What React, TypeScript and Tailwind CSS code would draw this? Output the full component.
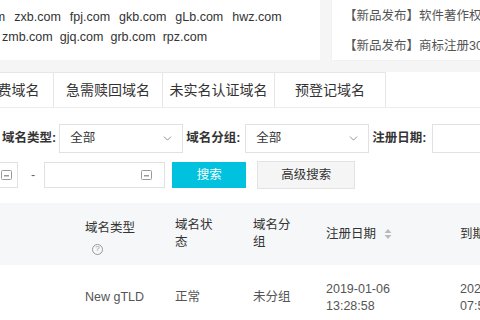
import { ChevronDown } from 'lucide-react'

const lineOne = ['hzb.com', 'zxb.com', 'fpj.com', 'gkb.com', 'gLb.com', 'hwz.com']
const lineTwo = ['zmb.com', 'gjq.com', 'grb.com', 'rpz.com']
const tabs = [
    { label: '免费域名', w: 'w-[84px]' },
    { label: '急需赎回域名', w: 'w-[109px]' },
    { label: '未实名认证域名', w: 'w-[112px]' },
    { label: '预登记域名', w: 'w-[111px]' },
]

function CalendarIcon() {
    return (
        <svg width="11" height="10" viewBox="0 0 11 10" className="text-[#999]">
            <rect x="0.5" y="0.5" width="10" height="9" rx="1" fill="none" stroke="currentColor" />
            <rect x="3" y="5" width="5" height="1.5" fill="currentColor" />
        </svg>
    )
}

function SortIcon() {
    return (
        <svg width="8" height="12" viewBox="0 0 8 12" className="text-[#bbb]">
            <path d="M4 1 L7.5 5 H0.5 Z" fill="currentColor" />
            <path d="M4 11 L7.5 7 H0.5 Z" fill="currentColor" />
        </svg>
    )
}

function Select() {
    return (
        <div className="flex items-center justify-between w-[124px] h-[29px] border border-[#e1e1e1] pl-[10px] pr-[8px]">
            <span>全部</span>
            <ChevronDown size={13} strokeWidth={1.5} className="text-[#777]" />
        </div>
    )
}

export default function App() {
    return (
        <div className="w-[480px] h-[320px] overflow-hidden bg-white text-[12.5px] text-[#333] font-['Liberation_Sans','Noto_Sans_CJK_SC',sans-serif]">
            {/* hot domains + news */}
            <div className="flex gap-[12px] h-[72px] bg-[#f5f5f5] pb-[12px]">
                <div className="w-[320px] shrink-0 bg-white pt-[7px] leading-[20px]">
                    <div className="flex gap-x-[9px] -ml-[42px] whitespace-nowrap">
                        {lineOne.map((d) => <span key={d}>{d}</span>)}
                    </div>
                    <div className="flex gap-x-[7px] ml-[2px] whitespace-nowrap">
                        {lineTwo.map((d) => <span key={d}>{d}</span>)}
                    </div>
                </div>
                <div className="flex-1 bg-white pl-[12px] pt-[7px] text-[#555] whitespace-nowrap leading-[18px] shadow-[0_0_2px_rgba(0,0,0,0.05)]">
                    <div>【新品发布】软件著作权登记</div>
                    <div className="mt-[12px]">【新品发布】商标注册300元</div>
                </div>
            </div>

            {/* tabs */}
            <div className="flex h-[36px] -ml-[30px] border-b border-[#ececec] text-[14px] text-[#333]">
                {tabs.map((t) => (
                    <div key={t.label} className={`${t.w} shrink-0 flex items-center justify-center border-t border-r border-[#e6e6e6] whitespace-nowrap`}>
                        {t.label}
                    </div>
                ))}
                <div className="flex-1" />
            </div>

            {/* filters */}
            <div className="flex items-center h-[29px] mt-[16px] ml-[2px] whitespace-nowrap">
                <span className="font-bold w-[56px]">域名类型:</span>
                <div className="ml-[3px]"><Select /></div>
                <span className="font-bold ml-[3px] w-[57px]">域名分组:</span>
                <div className="ml-[5px]"><Select /></div>
                <span className="font-bold ml-[3px] w-[54px]">注册日期:</span>
                <div className="ml-[6px] w-[120px] h-[29px] shrink-0 border border-[#e1e1e1]" />
            </div>
            <div className="flex items-center h-[28px] mt-[8px] whitespace-nowrap">
                <div className="flex items-center justify-end w-[18px] h-[26px] border border-l-0 border-[#e1e1e1] pr-[5px]">
                    <CalendarIcon />
                </div>
                <span className="ml-[13px] text-[#666]">-</span>
                <div className="ml-[9px] flex items-center justify-end w-[121px] h-[26px] border border-[#e1e1e1] pr-[12px]">
                    <CalendarIcon />
                </div>
                <button className="ml-[7px] w-[74px] h-[26px] bg-[#00c1de] text-white">搜索</button>
                <button className="ml-[11px] w-[98px] h-[28px] bg-[#f5f5f5] border border-[#e3e3e3] text-[#333]">高级搜索</button>
            </div>

            {/* table */}
            <div className="mt-[14px]">
                <div className="flex h-[62px] bg-[#f6f7f8] items-center leading-[17px] text-[#333]">
                    <div className="w-[85px] shrink-0" />
                    <div className="w-[90px] shrink-0 pt-[8px]">
                        <div>域名类型</div>
                        <div className="pl-[7px] pt-[2px]">
                            <span className="inline-flex items-center justify-center w-[11px] h-[11px] rounded-full border border-[#999] text-[8px] leading-none text-[#999]">?</span>
                        </div>
                    </div>
                    <div className="w-[78px] shrink-0"><div className="w-[40px]">域名状态</div></div>
                    <div className="w-[73px] shrink-0"><div className="w-[40px]">域名分组</div></div>
                    <div className="w-[134px] shrink-0 flex items-center gap-[8px]">
                        <span>注册日期</span>
                        <SortIcon />
                    </div>
                    <div className="flex-1 whitespace-nowrap">到期日期</div>
                </div>
                <div className="flex h-[66px] items-center leading-[17px] text-[#555] border-b border-[#eee]">
                    <div className="w-[85px] shrink-0" />
                    <div className="w-[90px] shrink-0">New gTLD</div>
                    <div className="w-[78px] shrink-0">正常</div>
                    <div className="w-[73px] shrink-0">未分组</div>
                    <div className="w-[134px] shrink-0">
                        <div>2019-01-06</div>
                        <div>13:28:58</div>
                    </div>
                    <div className="flex-1 whitespace-nowrap">
                        <div>2020-01-06</div>
                        <div>07:59:59</div>
                    </div>
                </div>
            </div>
        </div>
    )
}
